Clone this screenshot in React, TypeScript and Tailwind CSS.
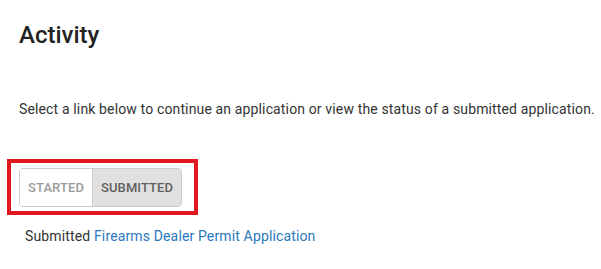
import React from "react";

export default function App() {
  return (
    <div
      className="relative w-[601px] h-[269px] bg-white text-[#333333] overflow-hidden"
      style={{ fontFamily: "Roboto, 'Liberation Sans', sans-serif" }}
    >
      <div className="pl-[19px] pt-[21px]">
        <h1 className="text-[24px] leading-[29px] font-medium text-[#222222]">Activity</h1>
        <p className="mt-[49px] text-[14px] leading-[20px] tracking-[0.14px] text-[#333333]">
          Select a link below to continue an application or view the status of a submitted application.
        </p>
        <div className="mt-[49px] inline-flex h-[39px] rounded-[4px] border border-[#cccccc] overflow-hidden">
          <button className="px-[8px] text-[13px] font-medium tracking-[0.1px] text-[#9a9a9a] bg-white">
            STARTED
          </button>
          <button className="px-[8px] text-[13px] font-medium tracking-[0.1px] text-[#606060] bg-[#e0e0e0] border-l border-[#cccccc]">
            SUBMITTED
          </button>
        </div>
        <div className="mt-[19px] pl-[6px] text-[14px] leading-[20px] tracking-[0.14px]">
          <span className="text-[#333333]">Submitted</span>{" "}
          <a className="text-[#2a78bd]" href="#">
            Firearms Dealer Permit Application
          </a>
        </div>
      </div>
      <div className="absolute left-[7px] top-[159px] w-[191px] h-[56px] border-[4px] border-[#e0181f] pointer-events-none" />
    </div>
  );
}
